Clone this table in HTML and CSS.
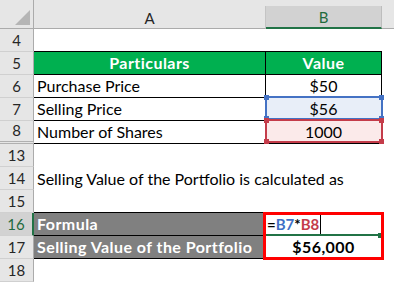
FILE: index.html
```html
<!DOCTYPE html>
<html>
<head>
<meta charset="utf-8">
<link rel="stylesheet" href="styles.css">
</head>
<body>
<div class="sheet">
  <div class="colhead">
    <div class="corner">
      <svg width="16" height="16" viewBox="0 0 16 16"><polygon points="15,0 15,15 0,15" fill="#b5b5b5"/></svg>
    </div>
    <div class="ch wa">A</div>
    <div class="ch wb chsel">B</div>
    <div class="ch wr"></div>
  </div>

  <div class="row">
    <div class="rh">4</div><div class="c wa tb"></div><div class="c wb tb"></div><div class="c wr"></div>
  </div>
  <div class="row">
    <div class="rh">5</div>
    <div class="c wa t green center bold">Particulars</div>
    <div class="c wb t green center bold">Value</div>
    <div class="c wr"></div>
  </div>
  <div class="row">
    <div class="rh">6</div>
    <div class="c wa t">Purchase Price</div>
    <div class="c wb t center">$50</div>
    <div class="c wr"></div>
  </div>
  <div class="row">
    <div class="rh">7</div>
    <div class="c wa t">Selling Price</div>
    <div class="c wb t center ref-blue-bg ref">$56
      <span class="refbox blue"><i class="sq tl"></i><i class="sq tr"></i><i class="sq bl"></i><i class="sq br"></i></span>
    </div>
    <div class="c wr"></div>
  </div>
  <div class="row">
    <div class="rh hidden-after">8</div>
    <div class="c wa t">Number of Shares</div>
    <div class="c wb t center ref-red-bg ref">1000
      <span class="refbox red"><i class="sq tl"></i><i class="sq tr"></i><i class="sq bl"></i><i class="sq br"></i></span>
    </div>
    <div class="c wr"></div>
  </div>
  <div class="row">
    <div class="rh">13</div><div class="c wa"></div><div class="c wb"></div><div class="c wr"></div>
  </div>
  <div class="row">
    <div class="rh">14</div>
    <div class="c wa overflow">Selling Value of the Portfolio is calculated as</div>
    <div class="c wb"></div><div class="c wr"></div>
  </div>
  <div class="row">
    <div class="rh">15</div><div class="c wa tb"></div><div class="c wb tb"></div><div class="c wr"></div>
  </div>
  <div class="row">
    <div class="rh rhsel">16</div>
    <div class="c wa t gray bold">Formula</div>
    <div class="c wb t formula active"><span class="k">=</span><span class="rb">B7</span><span class="k">*</span><span class="rr">B8</span><span class="caret"></span>
      <span class="redbox"></span>
      <span class="selline"></span>
      <span class="handle"></span>
    </div>
    <div class="c wr"></div>
  </div>
  <div class="row">
    <div class="rh">17</div>
    <div class="c wa t gray bold">Selling Value of the Portfolio</div>
    <div class="c wb t center bold">$56,000</div>
    <div class="c wr"></div>
  </div>
  <div class="row">
    <div class="rh">18</div><div class="c wa"></div><div class="c wb"></div><div class="c wr"></div>
  </div>
</div>
</body>
</html>
```

FILE: styles.css
```css
html, body {
  margin: 0;
  padding: 0;
  background: #ffffff;
}
body {
  font-family: Lato, "Liberation Sans", sans-serif;
  font-size: 16px;
  color: #000;
  width: 394px;
  height: 283px;
  overflow: hidden;
}
.sheet {
  display: flex;
  flex-direction: column;
}
.colhead {
  display: flex;
  height: 29px;
  background: #e6e6e6;
}
.corner {
  width: 34px;
  box-sizing: border-box;
  padding: 10px 0 0 15px;
  border-right: 1px solid #ababab;
  border-bottom: 1px solid #ababab;
}
.corner svg { display: block; }
.ch {
  box-sizing: border-box;
  margin-top: 6px;
  border-bottom: 1px solid #ababab;
  border-right: 1px solid #c4c4c4;
  display: flex;
  align-items: center;
  justify-content: center;
  color: #262626;
  font-size: 15px;
  padding-top: 1px;
}
.colhead .wr { border-right: none; }
.chsel {
  background: #d2d2d2;
  color: #1f6b3d;
  border-bottom: 2px solid #217346;
  border-right: 1px solid #bdbdbd;
}
.wa { width: 232px; }
.wb { width: 116px; }
.wr { width: 12px; }
.row {
  display: flex;
  height: 23px;
}
.rh {
  width: 34px;
  box-sizing: border-box;
  background: #e6e6e6;
  border-right: 1px solid #ababab;
  border-bottom: 1px solid #d0d0d0;
  display: flex;
  align-items: flex-end;
  justify-content: center;
  color: #262626;
  font-size: 15px;
  line-height: 20px;
  padding-bottom: 1px;
}
.hidden-after { border-bottom: 3px double #b0b0b0; }
.rhsel {
  background: #d2d2d2;
  color: #1f6b3d;
  border-right: 2px solid #217346;
}
.c {
  box-sizing: border-box;
  display: flex;
  align-items: flex-end;
  line-height: 20px;
  padding: 0 3px 1px 3px;
  white-space: nowrap;
}
.overflow { overflow: visible; }
.t {
  border-bottom: 1px solid #000;
  border-right: 1px solid #000;
}
.tb { border-bottom: 1px solid #000; }
.center { justify-content: center; }
.bold { font-weight: 700; letter-spacing: 0.45px; }
.green { background: #00b050; color: #fff; }
.gray { background: #808080; color: #fff; }
.ref { position: relative; }
.ref-blue-bg { background: #e8eef8; }
.ref-red-bg { background: #fbeaea; }
.refbox {
  position: absolute;
  left: -1px;
  top: -2px;
  width: 118px;
  height: 24px;
  box-sizing: border-box;
  border: 2px solid;
}
.refbox.blue { border-color: #4472c4; color: #4472c4; }
.refbox.red { border-color: #c43c4a; color: #c43c4a; }
.sq {
  position: absolute;
  width: 5px;
  height: 5px;
  background: currentColor;
}
.sq.tl { left: -3px; top: -3px; }
.sq.tr { right: -3px; top: -3px; }
.sq.bl { left: -3px; bottom: -3px; }
.sq.br { right: -3px; bottom: -3px; }
.formula {
  position: relative;
  font-weight: 700;
  font-size: 15px;
  padding-left: 1px;
}
.k { color: #000; }
.rb { color: #3f6fc6; }
.rr { color: #c43c4a; }
.caret {
  display: inline-block;
  width: 1px;
  height: 19px;
  background: #000;
  margin-left: 1px;
  align-self: flex-end;
}
.redbox {
  position: absolute;
  left: -3px;
  top: -1px;
  width: 121px;
  height: 48px;
  box-sizing: border-box;
  border: 3px solid #ff0000;
  z-index: 2;
}
.selline {
  position: absolute;
  left: 0;
  right: 1px;
  bottom: -1px;
  height: 2px;
  background: #217346;
  z-index: 1;
}
.handle {
  position: absolute;
  right: -2px;
  bottom: -3px;
  width: 5px;
  height: 5px;
  background: #217346;
  z-index: 1;
}
```
